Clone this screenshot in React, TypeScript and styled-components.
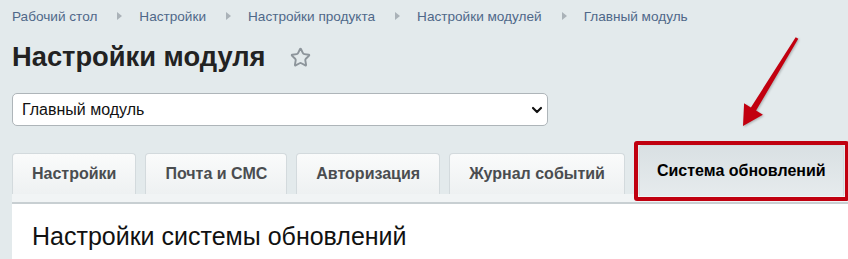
import React from 'react';
import styled, { createGlobalStyle } from 'styled-components';
import { Star, ChevronDown } from 'lucide-react';

const GlobalStyle = createGlobalStyle`
  html, body {
    margin: 0;
    padding: 0;
    background: #e3eaec;
    font-family: "Liberation Sans", Arial, sans-serif;
  }
`;

const Page = styled.div`
  position: relative;
  width: 848px;
  height: 259px;
  overflow: hidden;
  padding: 6px 0 0 12px;
  box-sizing: border-box;
`;

const Crumbs = styled.nav`
  display: flex;
  align-items: center;
  height: 20px;
  font-size: 13.6px;
  color: #4f6889;
`;

const Crumb = styled.span`
  white-space: nowrap;
`;

const Separator = styled.span`
  width: 0;
  height: 0;
  margin: 0 17px 0 20px;
  border-top: 4px solid transparent;
  border-bottom: 4px solid transparent;
  border-left: 5px solid #aab2b8;
`;

const TitleRow = styled.div`
  display: flex;
  align-items: center;
  margin-top: 16px;
  height: 30px;
`;

const Title = styled.h1`
  margin: 0;
  font-size: 27.3px;
  line-height: 30px;
  font-weight: bold;
  color: #222;
`;

const StarButton = styled.span`
  display: flex;
  margin-left: 24px;
  color: #8d959b;
`;

const SelectWrap = styled.div`
  position: relative;
  width: 536px;
  margin-top: 21px;
`;

const Select = styled.select`
  appearance: none;
  width: 100%;
  height: 33px;
  padding: 0 30px 0 9px;
  border: 1px solid #aeb5b9;
  border-radius: 5px;
  background: #fff;
  font-family: inherit;
  font-size: 16px;
  color: #111;
`;

const SelectArrow = styled.span`
  position: absolute;
  right: 3px;
  top: 9px;
  display: flex;
  pointer-events: none;
  color: #111;
`;

const TabRow = styled.div`
  display: flex;
  align-items: flex-end;
  gap: 9px;
  height: 49px;
  margin-top: 19px;
`;

const Tab = styled.div<{ active?: boolean }>`
  position: relative;
  z-index: ${(p) => (p.active ? 2 : 1)};
  display: flex;
  align-items: center;
  justify-content: center;
  box-sizing: border-box;
  height: ${(p) => (p.active ? '51px' : '41px')};
  margin-bottom: ${(p) => (p.active ? '-2px' : '0')};
  margin-left: ${(p) => (p.active ? '5px' : '0')};
  padding: ${(p) => (p.active ? '0 17px' : '0 19px')};
  border: 1px solid #d3dadd;
  border-bottom: none;
  border-radius: 4px 4px 0 0;
  background: ${(p) =>
    p.active
      ? 'linear-gradient(#d9e0e3, #e6ebed)'
      : 'linear-gradient(#fafbfb, #eef1f2)'};
  font-size: 16px;
  font-weight: bold;
  color: ${(p) => (p.active ? '#000' : '#4a4d50')};
  white-space: nowrap;
`;

const Highlight = styled.span`
  position: absolute;
  top: -5px;
  left: -6px;
  right: -6px;
  bottom: -5px;
  border: 4px solid #c0000f;
  border-radius: 3px;
  pointer-events: none;
`;

const TabStrip = styled.div`
  height: 8px;
  background: #f1f4f5;
  border-bottom: 2px solid #c8cfd2;
`;

const Panel = styled.section`
  background: #fff;
  padding: 17px 20px 0;
  height: 80px;
`;

const PanelTitle = styled.h2`
  margin: 0;
  font-size: 25px;
  line-height: 30px;
  font-weight: normal;
  color: #111;
`;

const Pointer = styled.svg`
  position: absolute;
  left: 730px;
  top: 30px;
  filter: drop-shadow(1px 1px 1px rgba(0, 0, 0, 0.25));
`;

const crumbs = ['Рабочий стол', 'Настройки', 'Настройки продукта', 'Настройки модулей', 'Главный модуль'];
const tabs = ['Настройки', 'Почта и СМС', 'Авторизация', 'Журнал событий', 'Система обновлений'];

export default function App() {
  return (
    <>
      <GlobalStyle />
      <Page>
        <Crumbs>
          {crumbs.map((c, i) => (
            <React.Fragment key={c}>
              {i > 0 && <Separator />}
              <Crumb>{c}</Crumb>
            </React.Fragment>
          ))}
        </Crumbs>
        <TitleRow>
          <Title>Настройки модуля</Title>
          <StarButton>
            <Star size={21} strokeWidth={2.2} />
          </StarButton>
        </TitleRow>
        <SelectWrap>
          <Select defaultValue="main">
            <option value="main">Главный модуль</option>
          </Select>
          <SelectArrow>
            <ChevronDown size={16} strokeWidth={3.2} />
          </SelectArrow>
        </SelectWrap>
        <TabRow>
          {tabs.map((t, i) => {
            const active = i === tabs.length - 1;
            return (
              <Tab key={t} active={active}>
                {t}
                {active && <Highlight />}
              </Tab>
            );
          })}
        </TabRow>
        <TabStrip />
        <Panel>
          <PanelTitle>Настройки системы обновлений</PanelTitle>
        </Panel>
        <Pointer width="80" height="105" viewBox="0 0 80 105">
          <polygon
            points="65.7,7.2 68.3,8.8 26.1,80.6 32.9,84.8 13,96 14.1,73.2 20.9,77.4"
            fill="#c2000f"
          />
        </Pointer>
      </Page>
    </>
  );
}
